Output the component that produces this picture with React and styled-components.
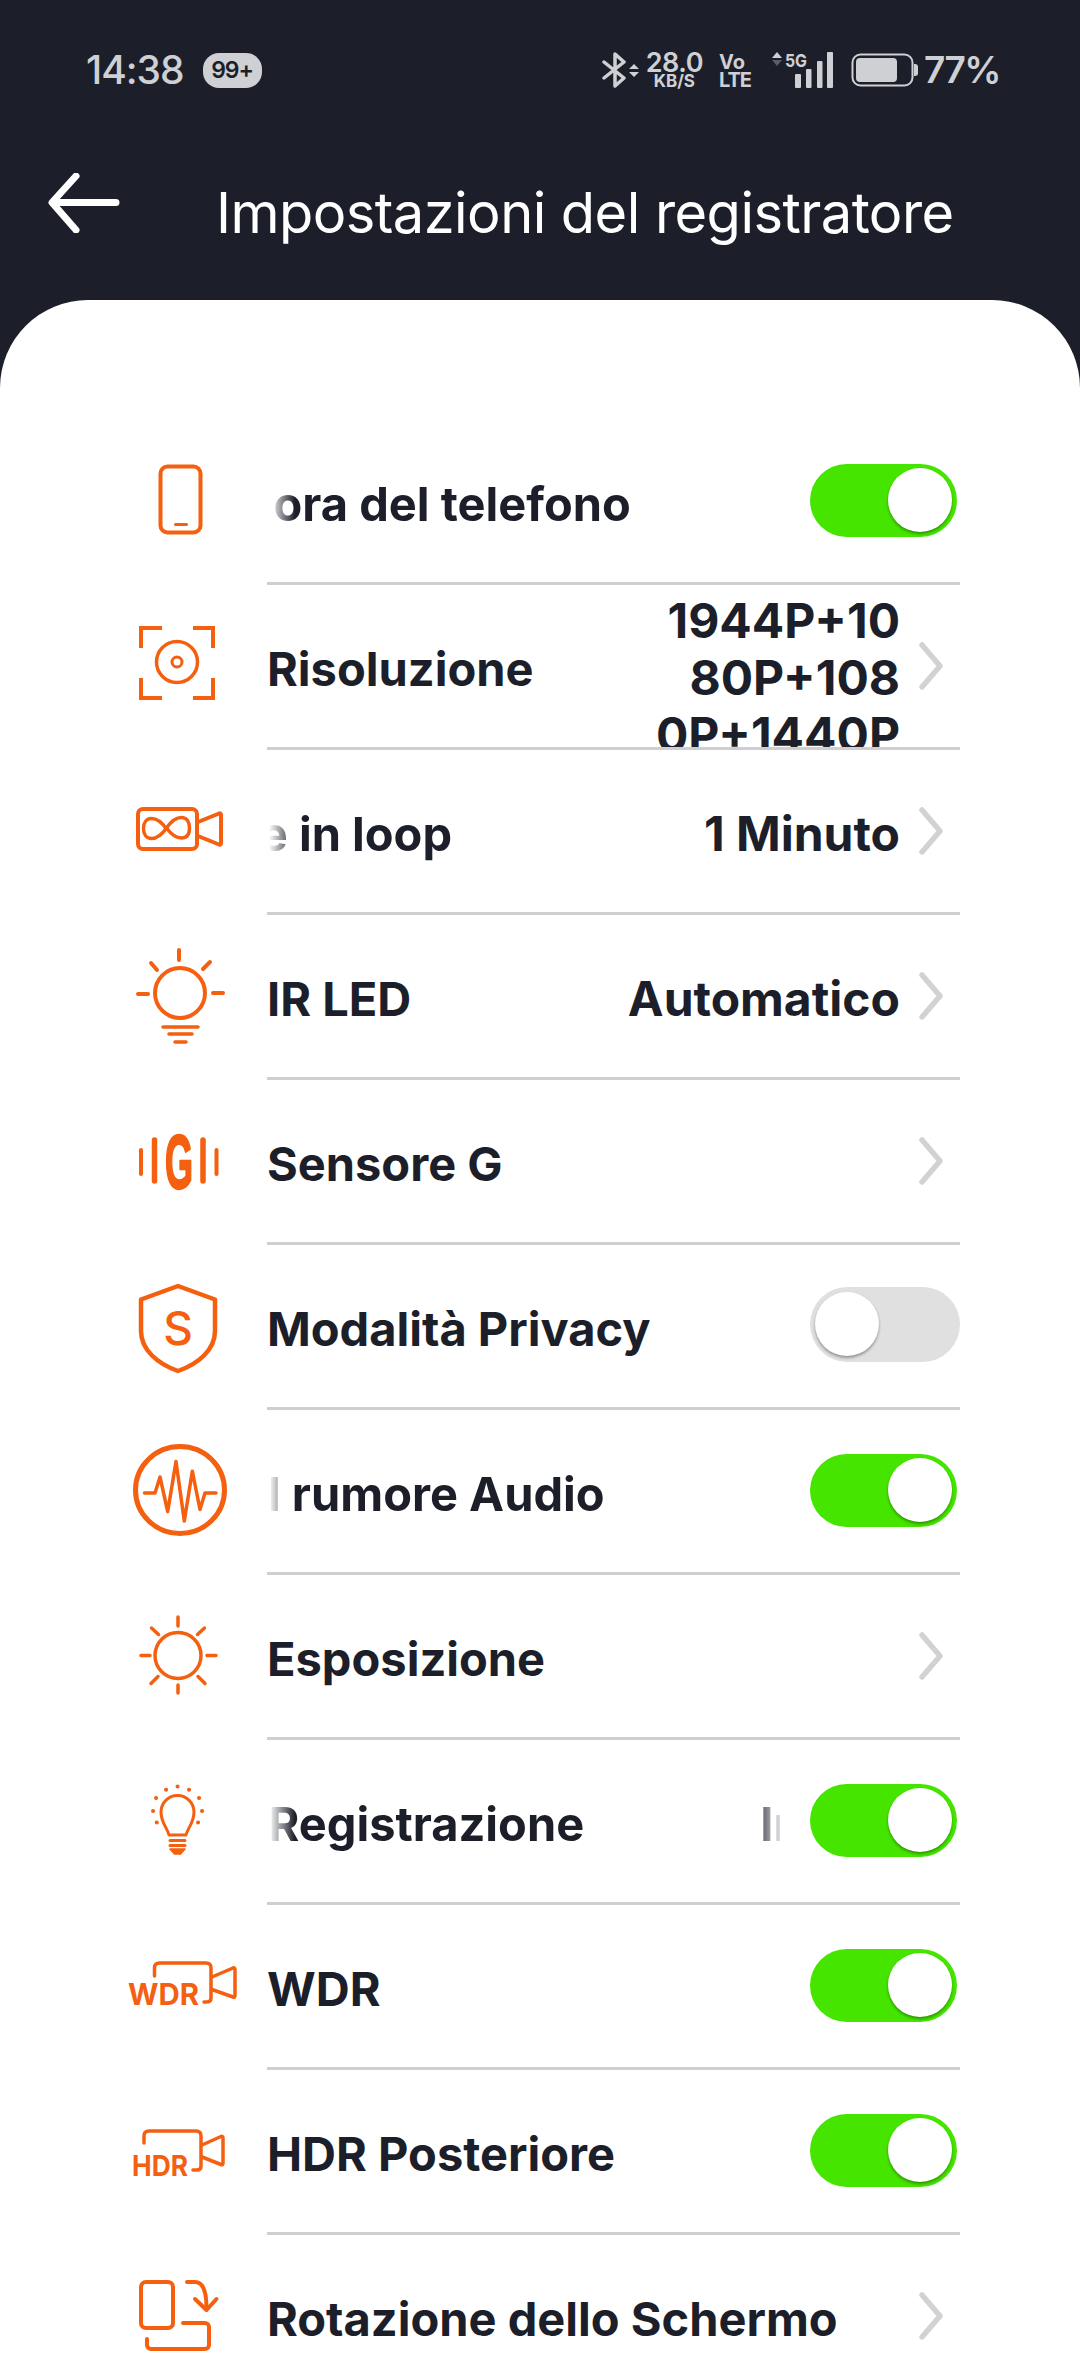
import React from "react";
import styled, { createGlobalStyle } from "styled-components";

const ORANGE = "#f4600f";
const INK = "#1c1f2a";
const STATUS = "#cfd0d3";

const GlobalStyle = createGlobalStyle`
  html, body {
    margin: 0;
    padding: 0;
    background: ${INK};
  }
  body {
    font-family: "Inter", "Liberation Sans", sans-serif;
  }
`;

const Screen = styled.div`
  width: 1080px;
  height: 2354px;
  overflow: hidden;
  background: ${INK};
`;

/* status bar */
const StatusBar = styled.div`
  display: flex;
  justify-content: space-between;
  align-items: center;
  height: 36px;
  padding: 52px 80px 0 86px;
  color: ${STATUS};
`;

const StatusLeft = styled.div`
  display: flex;
  align-items: center;
  gap: 19px;
`;

const StatusRight = styled.div`
  display: flex;
  align-items: center;
`;

const Clock = styled.span`
  font-size: 39px;
  font-weight: 500;
  letter-spacing: -1px;
  line-height: 36px;
`;

const Badge = styled.span`
  display: flex;
  align-items: center;
  justify-content: center;
  width: 59px;
  height: 35px;
  border-radius: 16px;
  background: ${STATUS};
  color: ${INK};
  font-size: 23px;
  font-weight: 600;
  letter-spacing: -1px;
`;

const Stack = styled.div`
  display: flex;
  flex-direction: column;
  align-items: ${(p) => p.$align || "center"};
  margin-left: ${(p) => p.$left}px;
  height: 36px;
`;

const SpeedValue = styled.span`
  font-size: 27px;
  font-weight: 600;
  line-height: 22px;
  letter-spacing: -0.5px;
`;

const SpeedUnit = styled.span`
  font-size: 17px;
  font-weight: 700;
  line-height: 14px;
`;

const VolteTop = styled.span`
  font-size: 20px;
  font-weight: 700;
  line-height: 20px;
`;

const VolteBottom = styled.span`
  font-size: 20px;
  font-weight: 700;
  line-height: 16px;
  letter-spacing: -1px;
`;

const Percent = styled.span`
  margin-left: 6px;
  font-size: 37px;
  font-weight: 600;
  letter-spacing: -1.5px;
  line-height: 36px;
`;

const StatusIcon = styled.svg`
  display: block;
  margin-left: ${(p) => p.$left || 0}px;
  flex: none;
`;

/* header */
const Toolbar = styled.div`
  display: flex;
  align-items: center;
  height: 212px;
  padding: 0 0 0 48px;
  box-sizing: border-box;
`;

const BackIcon = styled.svg`
  display: block;
  flex: none;
  margin-top: 18px;
`;

const Title = styled.h1`
  margin: 38px 0 0 96px;
  font-size: 56px;
  font-weight: 400;
  letter-spacing: -0.55px;
  color: #ffffff;
  white-space: nowrap;
  line-height: 64px;
`;

/* sheet */
const Sheet = styled.div`
  background: #ffffff;
  border-radius: 88px 88px 0 0;
  padding: 120px 120px 0 0;
  height: 2054px;
  box-sizing: border-box;
`;

const Row = styled.div`
  display: flex;
  height: 165px;
`;

const IconCell = styled.div`
  flex: none;
  box-sizing: border-box;
  width: 267px;
  padding: 0 0 3px 113px;
  display: flex;
  align-items: center;
`;

const Body = styled.div`
  flex: 1;
  min-width: 0;
  display: flex;
  align-items: center;
  overflow: hidden;
  box-sizing: border-box;
  height: 165px;
  border-bottom: 3px solid #cfcfcf;
`;

const Label = styled.span`
  flex: 1;
  font-size: 47px;
  font-weight: 700;
  color: ${INK};
  white-space: nowrap;
  padding-top: 4px;
`;

const Marquee = styled.div`
  flex: none;
  width: ${(p) => p.$width}px;
  overflow: hidden;
  padding-top: 4px;
  margin-right: auto;
  -webkit-mask-image: linear-gradient(to right, transparent 2px, #000 28px, #000 calc(100% - 28px), rgba(0, 0, 0, 0.15));
  mask-image: linear-gradient(to right, transparent 2px, #000 28px, #000 calc(100% - 28px), rgba(0, 0, 0, 0.15));
`;

const MarqueeTrack = styled.div`
  display: inline-flex;
  gap: ${(p) => p.$gap || 174}px;
  font-size: 47px;
  font-weight: 700;
  color: ${INK};
  white-space: nowrap;
  transform: translateX(${(p) => p.$shift}px);
`;

const Value = styled.div`
  flex: none;
  font-size: 48px;
  font-weight: 650;
  line-height: 57px;
  color: ${INK};
  text-align: right;
  white-space: nowrap;
  padding-top: 4px;
`;

const ClippedValue = styled(Value)`
  align-self: flex-start;
  padding-top: 7px;
`;

const Chevron = styled.svg`
  display: block;
  flex: none;
  margin: 0 17px 0 19px;
`;

const Toggle = styled.div`
  flex: none;
  display: flex;
  align-items: center;
  box-sizing: border-box;
  justify-content: ${(p) => (p.$on ? "flex-end" : "flex-start")};
  width: ${(p) => (p.$on ? 147 : 150)}px;
  height: ${(p) => (p.$on ? 73 : 75)}px;
  margin: ${(p) => (p.$on ? "-2px 3px 0 0" : "-4px 0 0 0")};
  padding: 0 5px;
  border-radius: 38px;
  background: ${(p) => (p.$on ? "#45e500" : "#e0e0e0")};
`;

const Knob = styled.div`
  width: 64px;
  height: 64px;
  border-radius: 50%;
  background: #ffffff;
  box-shadow: 0 2px 3px rgba(0, 0, 0, 0.35);
`;

const Glyph = styled.svg`
  display: block;
  flex: none;
  fill: none;
  stroke: ${ORANGE};
  stroke-linecap: round;
  stroke-linejoin: round;
  stroke-width: 4;
`;

const IconText = styled.text`
  fill: ${ORANGE};
  stroke: none;
  font-family: "Inter", "Liberation Sans", sans-serif;
  font-weight: ${(p) => p.$weight || 700};
`;

const SensorLetter = styled.text`
  fill: ${ORANGE};
  stroke: ${ORANGE};
  stroke-width: 2.5;
  font-family: "Liberation Sans", sans-serif;
  font-weight: 700;
`;

const Icon = ({ children }) => (
  <Glyph width="130" height="110" viewBox="0 0 130 110">
    {children}
  </Glyph>
);

const PhoneIcon = () => (
  <Icon>
    <rect x="47.5" y="20.5" width="40" height="66" rx="7" />
    <path d="M62.5 78.5h11" strokeWidth="3" />
  </Icon>
);

const FocusIcon = () => (
  <Icon>
    <path d="M28 37V17h21M80 17h20v20M28 67v20h21M80 87h20V67" strokeLinecap="butt" strokeLinejoin="miter" />
    <circle cx="64" cy="51" r="20.5" strokeWidth="3.5" />
    <circle cx="64" cy="51" r="5" strokeWidth="3" />
  </Icon>
);

const LoopCamIcon = () => (
  <Icon>
    <rect x="25" y="33" width="59" height="40" rx="5" />
    <path d="M85 46l21-8.5q2-.7 2 1.500v28q0 2.200-2 1.500l-21-8.500" />
    <path d="M53.500 53C48 45 43 42.500 38.500 42.500c-5 0-8 4-8 10s3 10 8 10c4.500 0 9.500-2.500 15-10.500 5.500-8 10.500-10.500 15-10.500 5 0 8 4 8 10.500s-3 10-8 10c-4.500 0-9.500-2.500-15-10z" strokeWidth="3.5" />
  </Icon>
);

const LedIcon = () => (
  <Icon>
    <circle cx="67" cy="52" r="25" />
    <path d="M66 9v10M25 53h10M100 52h10M38 22l6 7M97 21l-7 7" />
    <path d="M50 86h35M56 93h23M62 101h11" strokeWidth="3.500" />
  </Icon>
);

const GSensorIcon = () => (
  <Icon>
    <path d="M28 44v24M103.500 44v24" />
    <path d="M41.500 34v41M90 34v41" strokeWidth="5.500" />
    <SensorLetter x="66" y="82" textAnchor="middle" fontSize="76" textLength="28" lengthAdjust="spacingAndGlyphs">
      G
    </SensorLetter>
  </Icon>
);

const ShieldIcon = () => (
  <Icon>
    <path d="M65 15L28 28.500V60c0 19 17 33 37 40 20-7 37-21 37-40V28.500z" strokeWidth="4.500" />
    <IconText x="65" y="74" textAnchor="middle" fontSize="46" $weight={500}>
      S
    </IconText>
  </Icon>
);

const NoiseIcon = () => (
  <Icon>
    <ellipse cx="67" cy="54" rx="44.500" ry="43.500" strokeWidth="5" />
    <path d="M31.500 57H42l5-16 7.700 34.500L63 25.600l8.300 59.400 8-49.800L87 73.500 92 57h11" strokeWidth="3.500" />
  </Icon>
);

const SunIcon = () => (
  <Icon>
    <circle cx="65" cy="54.500" r="23" strokeWidth="3.500" />
    <path d="M65 16v9M65 84v8M28 54.500h9M94 54.500h9M38.500 27l7 6.500M85 75.500l7 7M91.500 27l-7 6.500M45 75.500l-7 7" strokeWidth="3.500" />
  </Icon>
);

const BulbIcon = () => (
  <Icon>
    <path d="M56 69c-1.500-7-8-12-8-23a16.500 16.500 0 0 1 33 0c0 11-6.500 16-8 23z" strokeWidth="3" />
    <path d="M57 74.500h15M57 79.500h15" strokeWidth="3" />
    <path d="M57 83h15l-4.500 5h-6z" fill={ORANGE} strokeWidth="1.500" />
    <path d="M64.500 20.500h.1M53 23.700h.1M76 23.700h.1M43 32h.1M86 32h.1M40 45h.1M89 45h.1M43.700 56.400h.1M85 56.400h.1" strokeWidth="4" />
  </Icon>
);

const WdrIcon = () => (
  <Icon>
    <path d="M41.500 45V37q0-5 5-5H93q5 0 5 5v30q0 4-4.500 4H91" strokeWidth="3.500" />
    <path d="M99 46l21-9q2-.7 2 1.500v26q0 2.200-2 1.500l-21-7.500" strokeWidth="3.500" />
    <IconText x="15" y="74" fontSize="30" textLength="71" lengthAdjust="spacingAndGlyphs">
      WDR
    </IconText>
  </Icon>
);

const HdrIcon = () => (
  <Icon>
    <path d="M31 47V40q0-5 5-5H83q5 0 5 5v30q0 4-4 4H80" strokeWidth="3.500" />
    <path d="M89 49l19-8.500q2-.7 2 1.500v25q0 2.200-2 1.500l-19-7.500" strokeWidth="3.500" />
    <IconText x="19" y="80" fontSize="29" textLength="56" lengthAdjust="spacingAndGlyphs">
      HDR
    </IconText>
  </Icon>
);

const RotateIcon = () => (
  <Icon>
    <rect x="28" y="21" width="32" height="46" rx="5" />
    <path d="M74 21h8c7 0 11.500 8 11.500 26" />
    <path d="M82 38l11.500 11L103.500 38" />
    <path d="M70 62h22a4 4 0 0 1 4 4v18a4 4 0 0 1-4 4H38a4 4 0 0 1-4-4v-6" />
  </Icon>
);

const ChevronRight = () => (
  <Chevron width="24" height="48" viewBox="0 0 24 48" fill="none" stroke="#d2d2d2" strokeWidth="5.500" strokeLinecap="round" strokeLinejoin="round">
    <path d="M3 3l18 21L3 45" />
  </Chevron>
);

const BluetoothIcon = () => (
  <StatusIcon width="37" height="36" viewBox="0 0 37 36" fill="none">
    <path d="M2 10l20 16-9 8V2l9 8L2 26" stroke={STATUS} strokeWidth="3.500" strokeLinejoin="round" strokeLinecap="round" />
    <path d="M27 17l5-5 5 5zM27 20h10l-5 5z" fill={STATUS} />
  </StatusIcon>
);

const SignalIcon = () => (
  <StatusIcon $left={20} width="62" height="36" viewBox="0 0 62 36" fill="none">
    <path d="M1 6l5-6 5 6z" fill={STATUS} />
    <path d="M1 8l5 6 5-6z" fill="#5b5d64" />
    <text x="14" y="15" fontFamily="Inter, sans-serif" fontSize="18" fontWeight="700" fill={STATUS} textLength="22" lengthAdjust="spacingAndGlyphs">
      5G
    </text>
    <rect x="24" y="22" width="6" height="14" rx="1" fill={STATUS} />
    <rect x="35" y="17" width="5.500" height="19" rx="1" fill={STATUS} />
    <rect x="46" y="9" width="5.500" height="27" rx="1" fill={STATUS} />
    <rect x="56" y="0" width="6" height="36" rx="1" fill={STATUS} />
  </StatusIcon>
);

const BatteryIcon = () => (
  <StatusIcon $left={18} width="67" height="34" viewBox="0 0 67 34" fill="none">
    <rect x="1.500" y="1.500" width="60" height="31" rx="8" stroke={STATUS} strokeWidth="2" />
    <rect x="5" y="5" width="41" height="24" rx="4" fill={STATUS} />
    <path d="M63 11h1a3 3 0 0 1 3 3v6a3 3 0 0 1-3 3h-1z" fill={STATUS} />
  </StatusIcon>
);

const rows = [
  { icon: PhoneIcon, track: ["Sincronizza ora del telefono"], shift: -275, width: 513, toggle: true },
  { icon: FocusIcon, label: "Risoluzione", lines: ["1944P+10", "80P+108", "0P+1440P"], chevron: true },
  { icon: LoopCamIcon, track: ["Registrazione in loop"], shift: -295, width: 300, value: "1 Minuto", chevron: true },
  { icon: LedIcon, label: "IR LED", value: "Automatico", chevron: true },
  { icon: GSensorIcon, label: "Sensore G", chevron: true },
  { icon: ShieldIcon, label: "Modalità Privacy", toggle: false },
  { icon: NoiseIcon, track: ["Riduzione del rumore Audio", "Riduzione"], shift: -296, width: 513, toggle: true },
  { icon: SunIcon, label: "Esposizione", chevron: true },
  { icon: BulbIcon, track: ["Indicatore di Registrazione", "Indicatore"], shift: -295, width: 513, gap: 176, toggle: true },
  { icon: WdrIcon, label: "WDR", toggle: true },
  { icon: HdrIcon, label: "HDR Posteriore", toggle: true },
  { icon: RotateIcon, label: "Rotazione dello Schermo", chevron: true },
];

const SettingRow = ({ row }) => {
  const RowIcon = row.icon;
  return (
    <Row>
      <IconCell>
        <RowIcon />
      </IconCell>
      <Body>
        {row.track ? (
          <Marquee $width={row.width}>
            <MarqueeTrack $shift={row.shift} $gap={row.gap}>
              {row.track.map((text) => (
                <span key={text}>{text}</span>
              ))}
            </MarqueeTrack>
          </Marquee>
        ) : (
          <Label>{row.label}</Label>
        )}
        {row.value && <Value>{row.value}</Value>}
        {row.lines && (
          <ClippedValue>
            {row.lines.map((line) => (
              <div key={line}>{line}</div>
            ))}
          </ClippedValue>
        )}
        {row.chevron && <ChevronRight />}
        {row.toggle !== undefined && (
          <Toggle $on={row.toggle}>
            <Knob />
          </Toggle>
        )}
      </Body>
    </Row>
  );
};

export default function App() {
  return (
    <Screen>
      <GlobalStyle />
      <StatusBar>
        <StatusLeft>
          <Clock>14:38</Clock>
          <Badge>99+</Badge>
        </StatusLeft>
        <StatusRight>
          <BluetoothIcon />
          <Stack $left={7}>
            <SpeedValue>28.0</SpeedValue>
            <SpeedUnit>KB/S</SpeedUnit>
          </Stack>
          <Stack $left={16} $align="flex-start">
            <VolteTop>Vo</VolteTop>
            <VolteBottom>LTE</VolteBottom>
          </Stack>
          <SignalIcon />
          <BatteryIcon />
          <Percent>77%</Percent>
        </StatusRight>
      </StatusBar>
      <Toolbar>
        <BackIcon width="72" height="60" viewBox="0 0 72 60" fill="none" stroke="#ffffff" strokeWidth="7" strokeLinecap="round" strokeLinejoin="round">
          <path d="M68 29.500H6M28 3L4 29.500 28 57" />
        </BackIcon>
        <Title>Impostazioni del registratore</Title>
      </Toolbar>
      <Sheet>
        {rows.map((row, i) => (
          <SettingRow key={i} row={row} />
        ))}
      </Sheet>
    </Screen>
  );
}
